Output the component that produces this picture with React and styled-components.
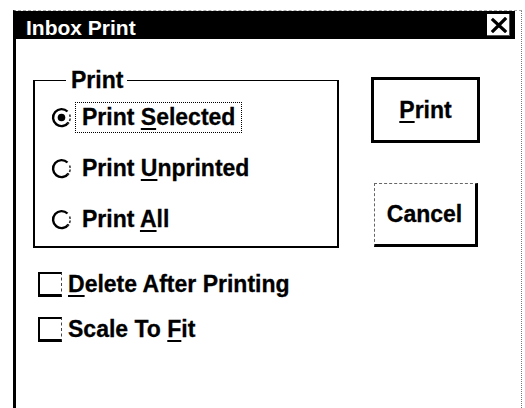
import React from 'react';
import styled, { createGlobalStyle } from 'styled-components';

const Global = createGlobalStyle`
  html, body { margin: 0; padding: 0; background: #fff; }
  body {
    font-family: "Liberation Sans", Arial, sans-serif;
    width: 525px; height: 408px; overflow: hidden; color: #000;
  }
`;

const Window = styled.div`
  box-sizing: border-box;
  margin: 10px 0 0 13px;
  width: 509px;
  height: 398px;
  border-left: 3px solid #000;
  border-right: 1px dotted #777;
  border-top: 1px dashed #aaa;
  display: flex;
  flex-direction: column;
`;

const TitleBar = styled.div`
  box-sizing: border-box;
  height: 28px;
  margin-right: 6px;
  background: #000;
  display: flex;
  align-items: center;
  justify-content: space-between;
  padding: 0 5px 0 10px;
`;

const Title = styled.span`
  color: #fff;
  font-weight: bold;
  font-size: 21px;
  line-height: 1;
  padding-top: 4px;
`;

const CloseButton = styled.div`
  width: 23px;
  height: 22px;
  background: #fff;
  display: flex;
  align-items: center;
  justify-content: center;
  box-shadow: inset -1px -1px 0 #555;
`;

const Body = styled.div`
  display: flex;
  align-items: flex-start;
  gap: 32px;
  padding: 29px 0 0 17px;
`;

const LeftColumn = styled.div`
  display: flex;
  flex-direction: column;
`;

const Group = styled.fieldset`
  box-sizing: border-box;
  width: 306px;
  margin: 0;
  padding: 8px 0 10px 16px;
  border: 2px solid #000;
  border-top-width: 1px;
  display: flex;
  flex-direction: column;
  gap: 17px;
`;

const Legend = styled.legend`
  margin-left: 15px;
  padding: 0 4px 0 5px;
  font-size: 23px;
  font-weight: bold;
  line-height: 24px;
  -webkit-text-stroke: 0.3px #000;
`;

const OptionRow = styled.div`
  display: flex;
  align-items: center;
  height: 34px;
`;

const OptionLabel = styled.span`
  margin-left: 3px;
  padding: 2px 6px;
  border: 1px dotted ${p => (p.$focused ? '#000' : 'transparent')};
  font-size: 23px;
  font-weight: bold;
  line-height: 25px;
  white-space: nowrap;
  -webkit-text-stroke: 0.3px #000;
`;

const Key = styled.u`
  text-decoration-thickness: 2px;
  text-underline-offset: 3px;
`;

const Checks = styled.div`
  display: flex;
  flex-direction: column;
  gap: 15px;
  margin-top: 21px;
  padding-left: 5px;
`;

const CheckRow = styled.div`
  display: flex;
  align-items: center;
  height: 30px;
`;

const CheckBox = styled.span`
  box-sizing: border-box;
  width: 24px;
  height: 25px;
  border: 2px solid #000;
  border-right: 1px dashed #444;
  border-bottom-width: 3px;
  flex: none;
`;

const CheckLabel = styled.span`
  margin-left: 6px;
  font-size: 23px;
  font-weight: bold;
  line-height: 25px;
  white-space: nowrap;
  -webkit-text-stroke: 0.3px #000;
`;

const ButtonColumn = styled.div`
  display: flex;
  flex-direction: column;
  align-items: center;
  gap: 40px;
  margin-top: 9px;
  width: 109px;
`;

const Button = styled.div`
  box-sizing: border-box;
  display: flex;
  align-items: center;
  justify-content: center;
  background: #fff;
  font-size: 23px;
  font-weight: bold;
  -webkit-text-stroke: 0.3px #000;
  width: ${p => (p.$default ? '109px' : '104px')};
  height: ${p => (p.$default ? '66px' : '64px')};
  border: ${p => (p.$default ? '3px solid #000' : '1px dashed #666')};
  border-right: 3px solid #000;
  border-bottom: 3px solid #000;
`;

const RadioIcon = ({ checked }) => (
  <svg width="21" height="21" viewBox="0 0 21 21" style={{ flex: 'none' }}>
    <path d="M16.5 4.5 A8.5 8.5 0 1 0 17.5 15.5" fill="none" stroke="#000" strokeWidth="2.4" />
    <path d="M18.6 7.5 A8.5 8.5 0 0 1 16.5 16.8" fill="none" stroke="#333" strokeWidth="1.6" strokeDasharray="2.5 1.5" />
    {checked && <circle cx="10.5" cy="10.5" r="3.8" fill="#000" />}
  </svg>
);

const CloseIcon = () => (
  <svg width="18" height="16" viewBox="0 0 18 16">
    <path d="M3 3 L15 14 M15 2 L3 14" stroke="#000" strokeWidth="3.2" strokeLinecap="square" />
  </svg>
);

const options = [
  { pre: 'Print ', key: 'S', post: 'elected', checked: true },
  { pre: 'Print ', key: 'U', post: 'nprinted' },
  { pre: 'Print ', key: 'A', post: 'll' },
];

const checks = [
  { pre: '', key: 'D', post: 'elete After Printing' },
  { pre: 'Scale To ', key: 'F', post: 'it' },
];

export default function App() {
  return (
    <>
      <Global />
      <Window>
        <TitleBar>
          <Title>Inbox Print</Title>
          <CloseButton><CloseIcon /></CloseButton>
        </TitleBar>
        <Body>
          <LeftColumn>
            <Group>
              <Legend>Print</Legend>
              {options.map((o, i) => (
                <OptionRow key={i}>
                  <RadioIcon checked={o.checked} />
                  <OptionLabel $focused={o.checked}>
                    {o.pre}<Key>{o.key}</Key>{o.post}
                  </OptionLabel>
                </OptionRow>
              ))}
            </Group>
            <Checks>
              {checks.map((c, i) => (
                <CheckRow key={i}>
                  <CheckBox />
                  <CheckLabel>{c.pre}<Key>{c.key}</Key>{c.post}</CheckLabel>
                </CheckRow>
              ))}
            </Checks>
          </LeftColumn>
          <ButtonColumn>
            <Button $default><Key>P</Key>rint</Button>
            <Button>Cancel</Button>
          </ButtonColumn>
        </Body>
      </Window>
    </>
  );
}
